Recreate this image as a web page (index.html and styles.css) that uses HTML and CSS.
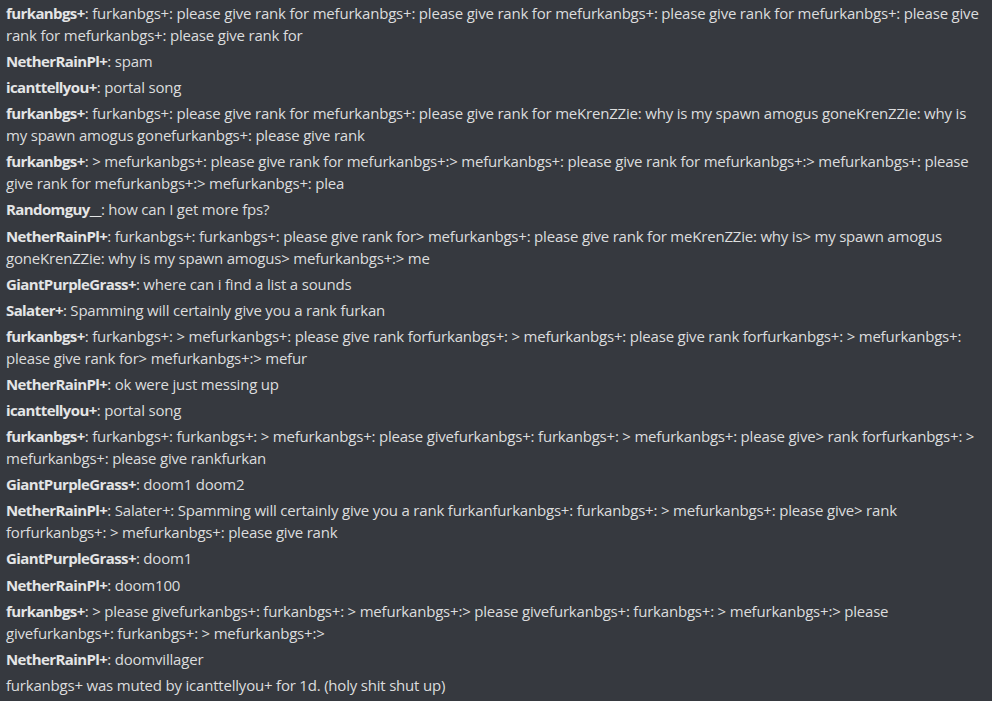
FILE: index.html
```html
<!DOCTYPE html>
<html lang="en">
<head>
  <meta charset="UTF-8">
  <title>Chat log</title>
  <link rel="stylesheet" href="styles.css">
</head>
<body>

  <div class="chat">
    <div class="msg"><b>furkanbgs+</b>: furkanbgs+: please give rank for mefurkanbgs+: please give rank for mefurkanbgs+: please give rank for mefurkanbgs+: please give rank for mefurkanbgs+: please give rank for</div>
    <div class="msg"><b>NetherRainPl+</b>: spam</div>
    <div class="msg"><b>icanttellyou+</b>: portal song</div>
    <div class="msg"><b>furkanbgs+</b>: furkanbgs+: please give rank for mefurkanbgs+: please give rank for meKrenZZie: why is my spawn amogus goneKrenZZie: why is my spawn amogus gonefurkanbgs+: please give rank</div>
    <div class="msg"><b>furkanbgs+</b>: &gt; mefurkanbgs+: please give rank for mefurkanbgs+:&gt; mefurkanbgs+: please give rank for mefurkanbgs+:&gt; mefurkanbgs+: please give rank for mefurkanbgs+:&gt; mefurkanbgs+: plea</div>
    <div class="msg"><b>Randomguy__</b>: how can I get more fps?</div>
    <div class="msg"><b>NetherRainPl+</b>: furkanbgs+: furkanbgs+: please give rank for&gt; mefurkanbgs+: please give rank for meKrenZZie: why is&gt; my spawn amogus goneKrenZZie: why is my spawn amogus&gt; mefurkanbgs+:&gt; me</div>
    <div class="msg"><b>GiantPurpleGrass+</b>: where can i find a list a sounds</div>
    <div class="msg"><b>Salater+</b>: Spamming will certainly give you a rank furkan</div>
    <div class="msg"><b>furkanbgs+</b>: furkanbgs+: &gt; mefurkanbgs+: please give rank forfurkanbgs+: &gt; mefurkanbgs+: please give rank forfurkanbgs+: &gt; mefurkanbgs+: please give rank for&gt; mefurkanbgs+:&gt; mefur</div>
    <div class="msg"><b>NetherRainPl+</b>: ok were just messing up</div>
    <div class="msg"><b>icanttellyou+</b>: portal song</div>
    <div class="msg"><b>furkanbgs+</b>: furkanbgs+: furkanbgs+: &gt; mefurkanbgs+: please givefurkanbgs+: furkanbgs+: &gt; mefurkanbgs+: please give&gt; rank forfurkanbgs+: &gt; mefurkanbgs+: please give rankfurkan</div>
    <div class="msg"><b>GiantPurpleGrass+</b>: doom1 doom2</div>
    <div class="msg"><b>NetherRainPl+</b>: Salater+: Spamming will certainly give you a rank furkanfurkanbgs+: furkanbgs+: &gt; mefurkanbgs+: please give&gt; rank forfurkanbgs+: &gt; mefurkanbgs+: please give rank</div>
    <div class="msg"><b>GiantPurpleGrass+</b>: doom1</div>
    <div class="msg"><b>NetherRainPl+</b>: doom100</div>
    <div class="msg"><b>furkanbgs+</b>: &gt; please givefurkanbgs+: furkanbgs+: &gt; mefurkanbgs+:&gt; please givefurkanbgs+: furkanbgs+: &gt; mefurkanbgs+:&gt; please givefurkanbgs+: furkanbgs+: &gt; mefurkanbgs+:&gt;</div>
    <div class="msg"><b>NetherRainPl+</b>: doomvillager</div>
    <div class="msg">furkanbgs+ was muted by icanttellyou+ for 1d. (holy shit shut up)</div>
  </div>

</body>
</html>
```

FILE: styles.css
```css
body {
  margin: 0;
  background: #36393f;
  color: #dcddde;
  font-family: 'Open Sans', sans-serif;
  font-size: 15px;
}

.chat {
  padding: 2px 6px 0 6px;
}

.msg {
  line-height: 22px;
  margin-bottom: 4.1px;
  letter-spacing: -0.2px;
}

.msg b {
  font-weight: 700;
  color: #e4e5e6;
  letter-spacing: -0.6px;
}
```
